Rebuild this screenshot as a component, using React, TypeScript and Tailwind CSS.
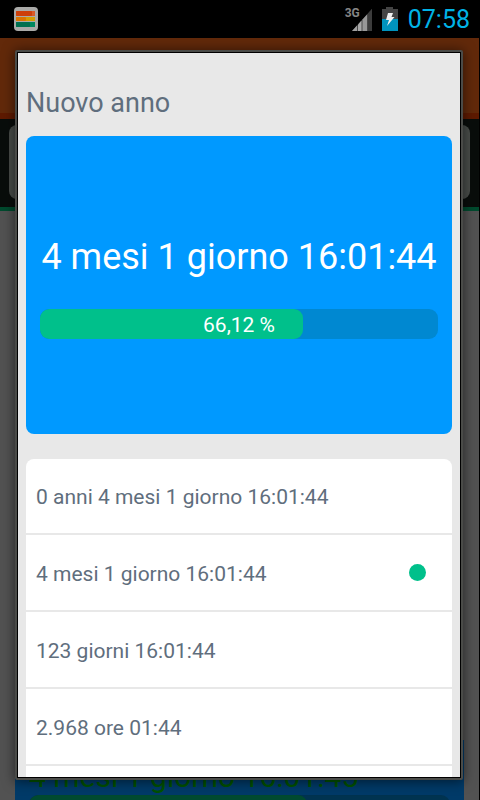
import { useState } from "react";

const FORMATS = [
  "0 anni 4 mesi 1 giorno 16:01:44",
  "4 mesi 1 giorno 16:01:44",
  "123 giorni 16:01:44",
  "2.968 ore 01:44",
  "178.081 minuti 44",
];

const PERCENT = 66.12;

function AppIcon() {
  return (
    <svg width="24" height="24" viewBox="0 0 24 24">
      <rect width="24" height="24" rx="4" fill="#aaaaa8" />
      <rect x="2" y="4" width="19" height="5" fill="#da5a27" />
      <rect x="2" y="4" width="16" height="5" rx="1" fill="#cd3f0a" />
      <rect x="2" y="10" width="19" height="4" fill="#d59b00" />
      <rect x="2" y="10" width="10" height="4" rx="1" fill="#db7300" />
      <rect x="2" y="15" width="19" height="5" fill="#00885f" />
      <rect x="2" y="15" width="14" height="5" rx="1" fill="#00704f" />
    </svg>
  );
}

function SignalIcon() {
  return (
    <svg width="28" height="26" viewBox="0 0 28 26">
      <path d="M7 25L27 3V25Z" fill="#4a4a4a" />
      <path d="M7 25L12 19.500V25Z" fill="#a0a0a0" />
      <path d="M13 18.400L16.500 14.500V25H13Z" fill="#a8a8a8" />
      <path d="M17.500 13.500L22 8.500V25H17.500Z" fill="#989898" />
      <path d="M23 7.400L27 3V25H23Z" fill="#3c3c3c" />
    </svg>
  );
}

function BatteryIcon() {
  return (
    <svg width="16" height="24" viewBox="0 0 16 24">
      <path d="M4 0H11V2H16V24H0V2H4Z" fill="#444" />
      <rect y="12" width="16" height="12" fill="#0093bd" />
      <path d="M6 6H11L9.500 10H12.500L5 19L7 13H4Z" fill="#f0f0f0" />
    </svg>
  );
}

function StatusBar() {
  return (
    <header className="flex h-[38px] shrink-0 items-center justify-between bg-black pr-[10px] pl-[14px]">
      <AppIcon />
      <div className="flex items-center">
        <div className="relative">
          <SignalIcon />
          <span className="absolute top-0 left-0 text-[12px] leading-[14px] font-bold text-[#858585]">3G</span>
        </div>
        <div className="ml-[9px]">
          <BatteryIcon />
        </div>
        <time className="ml-[10px] pt-[2px] text-[25px] leading-[30px] text-[#00b3e6]">07:58</time>
      </div>
    </header>
  );
}

// Dimmed main screen that stays visible around the dialog
function Backdrop() {
  return (
    <div className="flex flex-1 flex-col overflow-hidden border-r border-black bg-[#525252]" aria-hidden="true">
      <div className="h-[81px] shrink-0 border-b-[6px] border-[#5e1a00] bg-[#62290a]" />
      <div className="h-[92px] shrink-0 border-b-4 border-[#004a2e] bg-[#090d0b] px-[9px] pt-[6px]">
        <div className="h-[74px] rounded-lg bg-[#494d4a]" />
      </div>
      <div className="mt-auto h-[60px] shrink-0 overflow-hidden px-[15px]">
        <div className="h-full bg-[#003a68] px-[14px] pt-[19px]">
          <div className="text-[30px] leading-[36px] whitespace-nowrap text-[#005200]">4 mesi 1 giorno 16:01:45</div>
          <div className="h-[30px] overflow-hidden rounded-[9px] bg-[#003350]">
            <div className="h-full rounded-[9px] bg-[#004a30]" style={{ width: `${PERCENT}%` }} />
          </div>
        </div>
      </div>
    </div>
  );
}

function ProgressBar() {
  return (
    <div className="relative h-[30px] overflow-hidden rounded-[9px] bg-[#0088d1]">
      <div className="h-full rounded-[9px] bg-[#00c08b]" style={{ width: `${PERCENT}%` }} />
      <span className="absolute inset-0 text-center text-[21px] leading-[32px] text-white">66,12 %</span>
    </div>
  );
}

export default function App() {
  const [selected, setSelected] = useState(1);

  return (
    <div className="relative flex h-screen flex-col overflow-hidden bg-black font-['Roboto',sans-serif]">
      <StatusBar />
      <Backdrop />
      <div
        role="dialog"
        aria-labelledby="dialog-title"
        className="absolute top-[50px] right-[17px] bottom-[20px] left-[15px] rounded-xs border-2 border-[#4a4b48] bg-black p-px shadow-[0_1px_12px_1px_rgba(0,0,0,0.5)]"
      >
        <div className="h-full overflow-hidden bg-[#e8e8e8] px-2">
          <h1 id="dialog-title" className="pt-[34px] pb-[17px] text-[27px] leading-[32px] text-[#5f6e7d]">
            Nuovo anno
          </h1>
          <section className="flex h-[298px] flex-col rounded-lg bg-[#0099ff] px-[14px] pt-[100px]">
            <div className="text-center text-[36px] leading-[42px] whitespace-nowrap text-white">{FORMATS[selected]}</div>
            <div className="mt-[31px]">
              <ProgressBar />
            </div>
          </section>
          <ul className="mt-[25px] overflow-hidden rounded-t-lg bg-white">
            {FORMATS.slice(0, 4).map((format, index) => (
              <li key={format} className="h-[77px] border-b-2 border-[#e8e8e8] first:h-[76px]">
                <label className="flex h-full items-center justify-between pr-[26px] pl-[10px] text-[21px] leading-[25px] text-[#5f6e7d]">
                  <span className="pt-[3px]">{format}</span>
                  <input
                    type="radio"
                    name="format"
                    className="size-[17px] appearance-none rounded-full checked:bg-[#00c08b]"
                    checked={selected === index}
                    onChange={() => setSelected(index)}
                  />
                </label>
              </li>
            ))}
            <li className="h-[77px]" />
          </ul>
        </div>
      </div>
    </div>
  );
}
